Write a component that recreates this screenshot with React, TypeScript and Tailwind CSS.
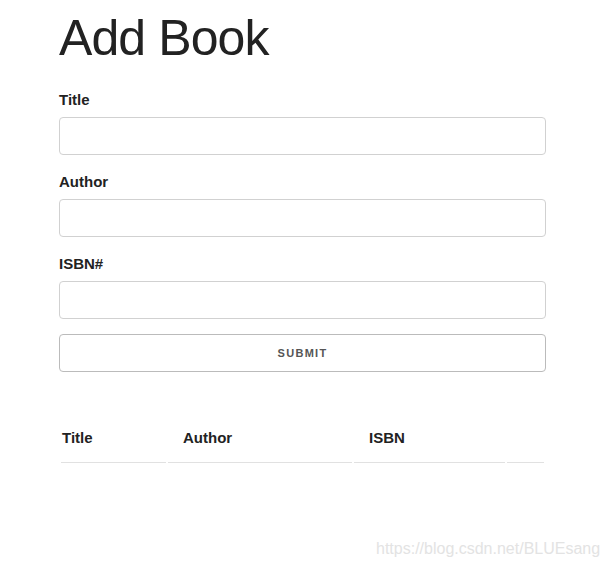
export default function App() {
  const fields = ["Title", "Author", "ISBN#"];

  return (
    <div className="relative min-h-[568px] w-[607px] bg-white font-['Liberation_Sans',Arial,sans-serif] text-[#222]">
      <div className="mx-[59px] w-[487px] pt-[8px]">
        <h1 className="mb-[20px] text-[50px] leading-[60px] font-normal tracking-[-0.9px]">Add Book</h1>

        <form onSubmit={(e) => e.preventDefault()}>
          {fields.map((f) => (
            <div key={f}>
              <label className="mb-[5px] block text-[15px] leading-[24px] font-bold">{f}</label>
              <input
                type="text"
                className="mb-[15px] block h-[38px] w-full rounded-[4px] border border-[#d1d1d1] px-[10px] py-[6px] outline-none"
              />
            </div>
          ))}
          <button
            type="submit"
            className="block h-[38px] w-full rounded-[4px] border border-[#bbb] bg-transparent text-[11px] font-bold tracking-[1.3px] text-[#555] uppercase"
          >
            Submit
          </button>
        </form>

        {/* Books list */}
        <table className="mt-[40px] w-full border-separate border-spacing-[2px] text-left text-[15px] leading-[24px]">
          <thead>
            <tr>
              <th className="w-[105px] border-b border-[#e1e1e1] py-[12px] pl-[1px] font-bold">Title</th>
              <th className="w-[184px] border-b border-[#e1e1e1] px-[15px] py-[12px] font-bold">Author</th>
              <th className="w-[151px] border-b border-[#e1e1e1] px-[15px] py-[12px] font-bold">ISBN</th>
              <th className="border-b border-[#e1e1e1] py-[12px]"></th>
            </tr>
          </thead>
          <tbody></tbody>
        </table>
      </div>

      <div className="absolute top-[539px] left-[376px] text-[16px] leading-[20px] text-[#e3e3e3]">
        https://blog.csdn.net/BLUEsang
      </div>
    </div>
  );
}
